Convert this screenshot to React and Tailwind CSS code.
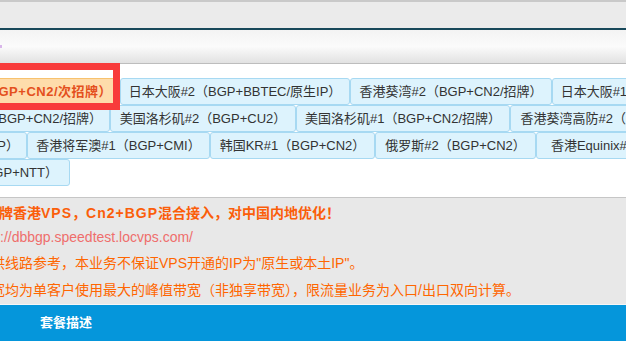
import React from "react";

const font = "font-['Liberation_Sans','Noto_Sans_CJK_SC',sans-serif]";

const rows = [
  [
    { w: "w-[140px]", t: "香港葵湾#1（BGP+CN2/次招牌）", first: "justify-end pr-[7px] tracking-[0.5px]", active: true },
    { w: "w-[230px]", t: "日本大阪#2（BGP+BBTEC/原生IP）" },
    { w: "w-[202px]", t: "香港葵湾#2（BGP+CN2/招牌）" },
    { w: "w-[230px]", t: "日本大阪#1（BGP+BBTEC/原生IP）" },
  ],
  [
    { w: "w-[130px]", t: "香港葵湾#1（BGP+CN2/招牌）", first: "justify-end pr-[7px]" },
    { w: "w-[186px]", t: "美国洛杉矶#2（BGP+CU2）" },
    { w: "w-[214px]", t: "美国洛杉矶#1（BGP+CN2/招牌）" },
    { w: "w-[230px]", t: "香港葵湾高防#2（BGP+CN2/招牌）" },
  ],
  [
    { w: "w-[47px]", t: "日本东京#1（BGP+原生IP）", first: "justify-end pr-[7px]" },
    { w: "w-[183px]", t: "香港将军澳#1（BGP+CMI）" },
    { w: "w-[165px]", t: "韩国KR#1（BGP+CN2）" },
    { w: "w-[161px]", t: "俄罗斯#2（BGP+CN2）" },
    { w: "w-[200px]", t: "香港Equinix#1（BGP+CN2）" },
  ],
  [{ w: "w-[90px]", t: "日本大阪#3（BGP+NTT）", first: "justify-end pr-[11px]" }],
];

function Tab({ tab }) {
  const base =
    "flex shrink-0 items-center whitespace-nowrap h-[27px] rounded-[3px] border text-[13px]";
  const look = tab.active
    ? "border-[#f7c26e] bg-[#fedcab] text-[#e4501d] font-bold"
    : "border-[#a7d9f2] bg-[#ddf3fd] text-[#333333]";
  const align = tab.first ? tab.first : "justify-center";
  return (
    <div className={`${base} ${look} ${align} ${tab.w}`}>
      <span>{tab.t}</span>
    </div>
  );
}

export default function App() {
  return (
    <div className={`w-[626px] h-[341px] overflow-hidden bg-white ${font}`}>
      {/* top strip */}
      <div className="h-[30px] bg-[#ebebeb] border-t-2 border-t-[#c9c9c9] border-b-2 border-b-[#18485a]" />
      {/* header bar */}
      <div className="h-[34px] flex items-center bg-gradient-to-b from-[#f3f3f3] via-[#fbfbfb] to-[#e2e2e2] border-b border-[#bdbdbd]">
        <span className="block w-[2px] h-[3px] bg-[#d9b6ea]" />
      </div>
      {/* tabs */}
      <div className="relative h-[133px] bg-white pt-[14px]">
        <div className="flex flex-col -ml-[20px]">
          {rows.map((row, i) => (
            <div key={i} className="flex">
              {row.map((tab, j) => (
                <Tab key={j} tab={tab} />
              ))}
            </div>
          ))}
        </div>
        <div className="absolute left-[-20px] top-[-1px] w-[140px] h-[47px] border-[7px] border-[#f83b3b]" />
      </div>
      {/* notice */}
      <div className="h-[108px] bg-[#e8e8e8] border-t border-t-[#c6c6c6] border-b border-b-[#f6f6f6] pt-[4px] whitespace-nowrap">
        <div className="h-[22px] flex items-center -ml-[1px] text-[14px] font-bold text-[#fb5e0a]">
          <span>
            牌香港<span className="tracking-[1px]">VPS</span>，<span className="tracking-[1px]">Cn2+BGP</span>混合接入，对中国内地优化！
          </span>
        </div>
        <div className="h-[26px] flex items-center text-[14px] text-[#ef6e6c]">
          ://dbbgp.speedtest.locvps.com/
        </div>
        <div className="h-[27px] flex items-center -ml-[9px] text-[14px] text-[#ff6600]">
          供线路参考，本业务不保证VPS开通的IP为"原生或本土IP"。
        </div>
        <div className="h-[26px] flex items-center -ml-[9px] text-[14px] text-[#ff6600]">
          宽均为单客户使用最大的峰值带宽（非独享带宽），限流量业务为入口/出口双向计算。
        </div>
      </div>
      {/* blue bar */}
      <div className="h-[36px] flex items-center bg-[#0596db] pl-[40px] text-[13px] font-bold text-white">
        套餐描述
      </div>
    </div>
  );
}
